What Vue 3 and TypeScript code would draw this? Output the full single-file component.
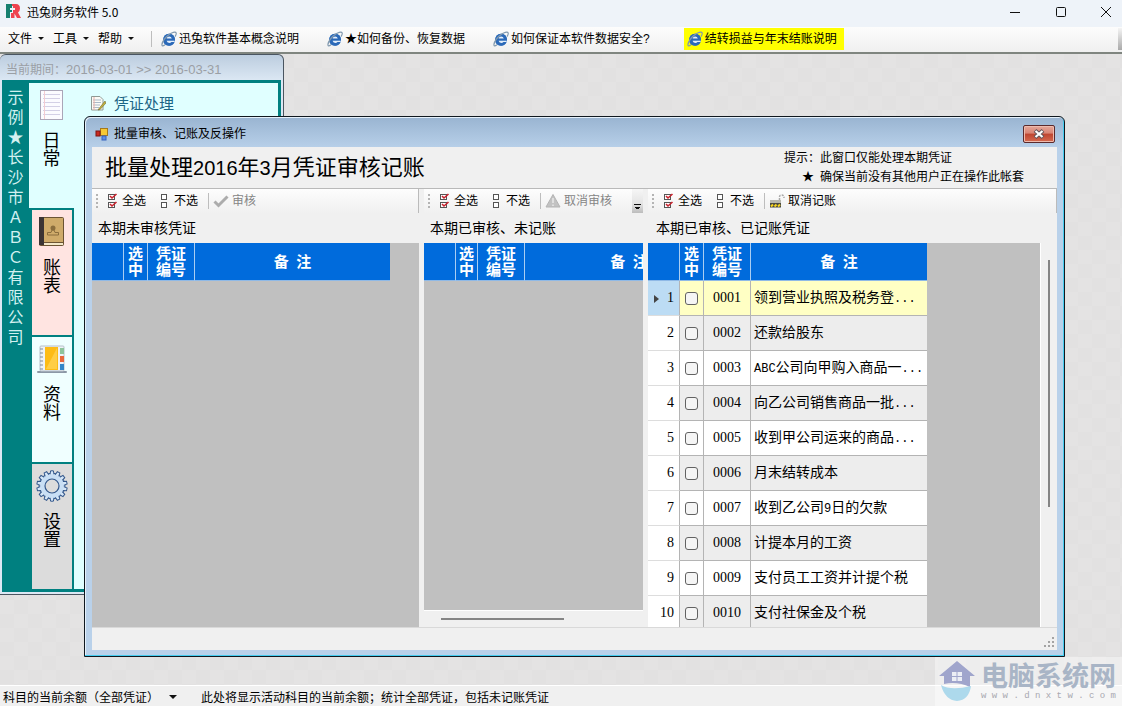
<script setup lang="ts">
import { ref } from 'vue'

interface Voucher { no: string; note: string; checked: boolean }
interface Panel {
  id: string
  title: string
  action: string
  icon: 'check' | 'warn' | 'lock'
  disabled: boolean
  kind: string
  rows: Voucher[]
}

const menus: string[] = ['文件', '工具', '帮助']
const links = [
  { text: '迅兔软件基本概念说明', hot: false },
  { text: '★如何备份、恢复数据', hot: false },
  { text: '如何保证本软件数据安全?', hot: false },
  { text: '结转损益与年末结账说明', hot: true },
]
const company: string[] = Array.from('示例★长沙市ＡＢＣ有限公司')
const notes: string[] = [
  '领到营业执照及税务登...', '还款给股东', 'ABC公司向甲购入商品一...', '向乙公司销售商品一批...',
  '收到甲公司运来的商品...', '月末结转成本', '收到乙公司9日的欠款', '计提本月的工资',
  '支付员工工资并计提个税', '支付社保金及个税',
]
const panels = ref<Panel[]>([
  { id: 'a', title: '本期未审核凭证', action: '审核', icon: 'check', disabled: true, kind: 'first', rows: [] },
  { id: 'b', title: '本期已审核、未记账', action: '取消审核', icon: 'warn', disabled: true, kind: 'second', rows: [] },
  {
    id: 'c', title: '本期已审核、已记账凭证', action: '取消记账', icon: 'lock', disabled: false, kind: 'third',
    rows: notes.map((note, i) => ({ no: String(i + 1).padStart(4, '0'), note, checked: false })),
  },
])

function setAll(panel: Panel, value: boolean): void {
  panel.rows.forEach((r) => { r.checked = value })
}
function parts(text: string): string[] {
  return text.split(/([A-Za-z0-9.]+)/).filter(Boolean)
}
function isLatin(text: string): boolean {
  return /^[A-Za-z0-9.]/.test(text)
}
const teeth: number[] = Array.from({ length: 14 }, (_, i) => (i * 360) / 14)
</script>

<template>
  <div class="app">
    <header class="titlebar">
      <svg class="logo" viewBox="0 0 15 15" aria-hidden="true">
        <path d="M0 0H6V4H4V6H6V8H4V14H0Z" fill="#17806f" />
        <path d="M6 0H10Q14 0 14 4.500Q14 7 12 8.500L15 14H11L8.500 9.500V14H5V9H7V6H9V4H7V2H6Z" fill="#ee4450" />
      </svg>
      <h1>迅兔财务软件 5.0</h1>
      <div class="winbtns">
        <button aria-label="最小化"><svg viewBox="0 0 12 12"><path d="M1 6.500H11" /></svg></button>
        <button aria-label="最大化"><svg viewBox="0 0 12 12"><rect x="1.500" y="1.500" width="9" height="9" rx="1" /></svg></button>
        <button aria-label="关闭"><svg viewBox="0 0 12 12"><path d="M1 1L11 11M11 1L1 11" /></svg></button>
      </div>
    </header>

    <nav class="menubar">
      <button v-for="m in menus" :key="m" class="menu">{{ m }}<i class="caret"></i></button>
      <span class="sep"></span>
      <div class="links">
        <a v-for="l in links" :key="l.text" href="#" :class="{ hot: l.hot }">
          <svg class="ie" viewBox="0 0 16 16" aria-hidden="true">
            <circle cx="8" cy="8.700" r="6" fill="#3c7cc9" />
            <path d="M14 9.700H5.600Q6 12 8.300 12Q9.700 12 10.500 11H13.500Q12 14.800 8.200 14.800Q2.300 14.500 2.300 8.700Q2.800 3 8.200 2.800Q14 3 14 9.700Z" fill="#2b69b8" />
            <path d="M5.600 7.600H10.800Q10.300 5.600 8.200 5.600Q6.100 5.600 5.600 7.600ZM5.600 9.800H13.500V10.900H10.400Q9.600 11.900 8.300 11.900Q6 11.900 5.600 9.800Z" fill="#e3eefa" />
            <path d="M4 13.700Q.5 16.300 1 13Q2 8.600 6.500 4.700Q12.500 .2 14.800 1.400Q16 2.600 14 5.600" fill="none" stroke="#8199ae" stroke-width="1.200" />
          </svg>{{ l.text }}</a>
      </div>
      <span class="more"></span>
    </nav>

    <main class="desktop">
      <section class="nav-window">
        <div class="period">当前期间：<span>2016-03-01 &gt;&gt; 2016-03-31</span></div>
        <div class="nav-body">
          <div class="company"><span v-for="(c, i) in company" :key="i">{{ c }}</span></div>
          <div class="tabs">
            <button class="tab daily">
              <svg viewBox="0 0 32 32"><rect x="4.500" y="1.500" width="22" height="29" fill="#fbfbff" stroke="#aaa6b8" /><path d="M7 5.500H24M7 9.500H24M7 13.500H24M7 17.500H24M7 21.500H24M7 25.500H24" stroke="#d3d0e6" /><path d="M8.500 2V30" stroke="#f3ccd2" /></svg>
              <span>日常</span>
            </button>
            <button class="tab ledger">
              <svg viewBox="0 0 32 32"><rect x="3" y="1" width="25" height="29" rx="2" fill="#6b5433" /><rect x="3" y="1" width="5" height="28" fill="#3b3434" /><rect x="8" y="2" width="19" height="24" fill="#cfab6a" /><path d="M8 28H27" stroke="#f3e8c8" stroke-width="2" /><circle cx="17" cy="12" r="2.500" fill="#8a6d3d" /><path d="M11.500 19V16.500H15L16 14H18L19 16.500H22.500V19Z" fill="none" stroke="#8a6d3d" /></svg>
              <span>账表</span>
            </button>
            <button class="tab data">
              <svg viewBox="0 0 32 32"><rect x="1" y="28" width="30" height="2" rx="1" fill="#8c98a6" /><rect x="4" y="3" width="24" height="25" rx="1" fill="#eef2f6" stroke="#b6c0ca" /><rect x="9" y="4" width="13" height="23" fill="#fdbc16" /><path d="M10 26L21 5V26Z" fill="#ffce45" /><rect x="24" y="5" width="4" height="6" fill="#8dc49b" /><rect x="24" y="13" width="4" height="6" fill="#e9683b" /><rect x="24" y="21" width="4" height="6" fill="#3187c8" /><path d="M4 6H7M4 10H7M4 14H7M4 18H7M4 22H7M4 26H7" stroke="#7e8b99" /></svg>
              <span>资料</span>
            </button>
            <button class="tab setup">
              <svg viewBox="0 0 32 32">
                <circle cx="16" cy="16" r="13" fill="#c9dff5" stroke="#34588c" />
                <g v-for="t in teeth" :key="t" :transform="`rotate(${t} 16 16)`"><path d="M14 4.500L14.600 .8H17.400L18 4.500" fill="#d5e6f7" stroke="#34588c" /></g>
                <circle cx="16" cy="16" r="11.500" fill="#c9dff5" />
                <circle cx="16" cy="16" r="7" fill="#dcdcdc" stroke="#34588c" stroke-width="1.200" />
              </svg>
              <span>设置</span>
            </button>
          </div>
          <div class="nav-content">
            <a href="#">
              <svg viewBox="0 0 16 16"><path d="M1.500 1.500H10L13 4.500V15H1.500Z" fill="#fbfbf6" stroke="#8f9a94" /><path d="M3 5H11M3 7.500H11M3 10H10M3 12.500H9" stroke="#aab9c8" /><path d="M4 2V15" stroke="#e9b0a8" /><path d="M15 6L9 13.500L8 15L10 14.500L16 8Z" fill="#c7b13c" stroke="#6a6a30" stroke-width=".6" /></svg>
              凭证处理</a>
          </div>
        </div>
      </section>

      <section class="dialog" role="dialog" aria-labelledby="dlg-title">
        <div class="dlg-title">
          <svg viewBox="0 0 14 14" aria-hidden="true"><rect x="5.500" y="1.500" width="7" height="7" fill="#f6c835" stroke="#a5791c" /><rect x="1" y="4" width="4" height="5" fill="#c92a20" stroke="#7f1511" /><rect x="7" y="9" width="4" height="4" fill="#5d8ee8" stroke="#3763bd" /></svg>
          <span id="dlg-title">批量审核、记账及反操作</span>
          <button class="close" aria-label="关闭"><svg viewBox="0 0 12 10"><path d="M2 1.500L10 8.500M10 1.500L2 8.500" stroke="#61555a" stroke-width="4" /><path d="M2.500 2L9.500 8M9.500 2L2.500 8" stroke="#fff" stroke-width="2.200" /></svg></button>
        </div>
        <div class="dlg-body">
          <div class="dlg-head">
            <h2>批量处理<span>2016</span>年<span>3</span>月凭证审核记账</h2>
            <div class="hint">
              <p>提示：此窗口仅能处理本期凭证</p>
              <p class="sub"><b>★</b>确保当前没有其他用户正在操作此帐套</p>
            </div>
          </div>
          <div class="panels">
            <div v-for="p in panels" :key="p.id" class="panel" :class="p.kind">
              <div class="tools">
                <span class="grip"></span>
                <button @click="setAll(p, true)">
                  <svg class="sm" viewBox="0 0 10 16"><rect x=".5" y="1.500" width="6" height="5" fill="#fff" stroke="#555" /><rect x=".5" y="9.500" width="6" height="5" fill="#fff" stroke="#555" /><path d="M2 3L4 5L8.500 1M2 11L4 13L8.500 9" fill="none" stroke="#c8202c" stroke-width="1.600" /></svg>全选
                </button>
                <button class="none" @click="setAll(p, false)">
                  <svg class="sm" viewBox="0 0 10 16"><rect x="1.500" y="1.500" width="5" height="5" fill="#fff" stroke="#555" /><rect x="1.500" y="9.500" width="5" height="5" fill="#fff" stroke="#555" /></svg>不选
                </button>
                <span class="sep"></span>
                <button class="act" :disabled="p.disabled">
                  <svg v-if="p.icon === 'check'" viewBox="0 0 16 16"><path d="M1.500 8.500L5.500 12.500L14.500 3.500" fill="none" stroke="#acacac" stroke-width="3" /></svg>
                  <svg v-else-if="p.icon === 'warn'" viewBox="0 0 16 16"><path d="M8 1.500L15 14H1Z" fill="#c2c2c2" stroke="#b4b4b4" stroke-linejoin="round" /><path d="M8 5V10M8 11.500V13" stroke="#e6e6e6" stroke-width="1.600" /></svg>
                  <svg v-else viewBox="0 0 16 16"><rect x="1" y="8" width="11" height="6.500" fill="#4a4a42" /><rect x="1" y="7" width="11" height="3" fill="#b8b8ae" /><path d="M2 13.500L4 11.500M5.500 13.500L7.500 11.500M9 13.500L11 11.500" stroke="#f6d51f" stroke-width="2" /><path d="M10.500 7V4Q10.500 2 12.500 2Q15 2 15 5" fill="none" stroke="#aaa" stroke-width="1.500" stroke-dasharray="2 1" /></svg>
                  {{ p.action }}
                </button>
                <span v-if="p.kind === 'second'" class="overflow"><i></i></span>
              </div>
              <div class="label">{{ p.title }}</div>
              <div class="pane">
                <div class="grid">
                  <table>
                    <colgroup><col class="c0"><col class="c1"><col class="c2"><col class="c3"></colgroup>
                    <thead>
                      <tr><th></th><th>选<br>中</th><th>凭证<br>编号</th><th>备&ensp;注</th></tr>
                    </thead>
                    <tbody>
                      <tr v-for="(r, i) in p.rows" :key="r.no" :class="{ current: i === 0 }">
                        <td class="num"><svg v-if="i === 0" viewBox="0 0 6 8"><path d="M0 0L5 4L0 8Z" fill="#444" /></svg>{{ i + 1 }}</td>
                        <td class="chk"><input v-model="r.checked" type="checkbox" :aria-label="'选中 ' + r.no"></td>
                        <td class="no">{{ r.no }}</td>
                        <td class="note"><span v-for="(s, k) in parts(r.note)" :key="k" :class="{ latin: isLatin(s) }">{{ s }}</span></td>
                      </tr>
                    </tbody>
                  </table>
                </div>
                <div v-if="p.kind === 'third'" class="vscroll"><i></i></div>
                <div v-if="p.kind === 'second'" class="hscroll"><i></i></div>
              </div>
            </div>
          </div>
          <div class="dlg-foot"><svg viewBox="0 0 12 12"><path d="M9 1h2v2h-2zM5 5h2v2h-2zM9 5h2v2h-2zM1 9h2v2h-2zM5 9h2v2h-2zM9 9h2v2h-2z" fill="#a3a3a3" /></svg></div>
        </div>
      </section>
    </main>

    <footer class="statusbar">
      <button>科目的当前余额（全部凭证）<i class="caret"></i></button>
      <span>此处将显示活动科目的当前余额；统计全部凭证，包括未记账凭证</span>
    </footer>

    <div class="watermark">
      <svg viewBox="0 0 38 42" aria-hidden="true">
        <path d="M19 1L37 16H32V27Q19 21 6 24V16H1Z" fill="#a0a5cc" />
        <path d="M14 12H24V21H14Z" fill="#eceef5" /><path d="M19 12V21M14 16.500H24" stroke="#a0a5cc" />
        <path d="M3 25Q13 31 33 26Q31 40 19 41Q7 40 3 25Z" fill="#add9ec" />
      </svg>
      <div><strong>电脑系统网</strong><small>w w w . d n x t w . c o m</small></div>
    </div>
  </div>
</template>

<style>
html, body { margin: 0; overflow: hidden; }
</style>

<style scoped>
* { box-sizing: border-box; }
.app {
  position: relative;
  display: flex;
  flex-direction: column;
  height: 100vh;
  background: #f0f0f0;
  color: #000;
  font: 12px/16px "Liberation Sans", "Noto Sans CJK SC", sans-serif;
  white-space: nowrap;
}
button {
  display: flex;
  align-items: center;
  margin: 0;
  padding: 0;
  border: 0;
  background: none;
  color: inherit;
  font: inherit;
}
a { color: inherit; text-decoration: none; }
h1, h2, p { margin: 0; font-weight: 400; }
svg { display: block; flex: none; }
.caret {
  width: 0;
  height: 0;
  border: 3px solid transparent;
  border-top-color: #111;
  border-bottom-width: 0;
}
.sep { width: 1px; height: 16px; background: #bdbdbd; }

.titlebar { display: flex; align-items: center; height: 27px; padding: 0 0 4px 6px; background: #eef3f9; }
.logo { width: 15px; height: 15px; margin-right: 6px; }
.titlebar h1 { font: 12px/16px "Noto Sans CJK SC", sans-serif; }
.winbtns { display: flex; margin-left: auto; }
.winbtns button { justify-content: center; width: 46px; height: 23px; }
.winbtns button:last-child { width: 38px; padding-left: 6px; }
.winbtns svg { width: 12px; height: 12px; fill: none; stroke: #111; }

.menubar {
  display: flex;
  align-items: center;
  height: 27px;
  padding: 0 0 2px 8px;
  background: linear-gradient(#fcfcfc, #f0f0f0);
  border-bottom: 2px solid #7f857f;
}
.menu { width: 45px; gap: 6px; }
.menubar > .sep { margin: 0 9px 0 8px; }
.links { display: flex; align-items: center; gap: 28px; }
.links a { display: flex; align-items: center; gap: 2px; height: 22px; }
.links .hot { margin-left: 6px; padding: 0 7px 0 3px; background: #ff0; }
.ie { width: 16px; height: 16px; }
.more { width: 4px; height: 22px; margin-left: auto; background: linear-gradient(#f4f4f4, #aaa); }

.desktop {
  position: relative;
  flex: 1;
  min-height: 0;
  overflow: hidden;
  background: repeating-conic-gradient(#e4e3e3 0 25%, #e2e1e1 0 50%) 0 0 / 28px 28px;
}
.nav-window {
  position: absolute;
  top: 0;
  left: 0;
  width: 284px;
  padding: 0 2px 2px;
  border: 1px solid #4a5560;
  border-left: 0;
  border-radius: 6px 6px 0 0;
  background: linear-gradient(#bccddf, #dce8f4 26px);
}
.period { height: 25px; padding: 4px 0 0 4px; color: #9b9fa5; font: 12px/20px "Noto Sans CJK SC", sans-serif; }
.period span { font: 13px/20px "Liberation Sans", sans-serif; }
.nav-body { display: flex; border: 3px solid #008080; border-width: 3px 3px 3px 0; background: #e0ffff; }
.company {
  display: flex;
  flex-direction: column;
  align-items: center;
  width: 27px;
  padding-top: 3px;
  background: #008080;
  color: #d2f0f0;
  font: 16px/20px "Noto Sans CJK SC", sans-serif;
}
.tabs { display: flex; flex-direction: column; width: 45px; background: #008080; gap: 2px; }
.tab {
  flex-direction: column;
  height: 125px;
  margin: 0 2px 0 3px;
  padding-top: 6px;
  gap: 9px;
  font: 18px/18px "Noto Sans CJK SC", sans-serif;
}
.tab svg { width: 32px; height: 32px; }
.tab span { width: 18px; white-space: normal; }
.daily { margin: 0; background: #e0ffff; }
.ledger { background: #ffe4e1; }
.data { background: #f0ffff; }
.setup { background: #dcdcdc; }
.nav-content { padding: 10px 16px; color: #1c6585; font: 15px/20px "Noto Sans CJK SC", sans-serif; }
.nav-content a { display: flex; align-items: center; gap: 8px; }
.nav-content svg { width: 16px; height: 16px; }

.dialog {
  position: absolute;
  top: 62px;
  right: 57px;
  bottom: 28px;
  left: 84px;
  display: flex;
  flex-direction: column;
  padding: 0 7px 6px;
  border: 1px solid #10181f;
  border-radius: 6px 6px 0 0;
  background: linear-gradient(#99b4d1, #b9d1ea 32px);
  box-shadow: inset -1px -1px 0 #45cdf0, inset 1px 1px 0 #e6f1fb;
}
.dlg-title { display: flex; align-items: center; height: 30px; padding: 4px 2px 0 3px; gap: 5px; }
.dlg-title > svg { width: 14px; height: 14px; }
.close {
  justify-content: center;
  width: 32px;
  height: 18px;
  margin-left: auto;
  border: 1px solid #5b2a2c;
  border-radius: 2px;
  background: linear-gradient(#e5a799, #d98474 45%, #be4530 50%, #d66a50);
  box-shadow: inset 0 0 0 1px #eebbae;
}
.close svg { width: 12px; height: 10px; }
.dlg-body { display: flex; flex: 1; flex-direction: column; min-height: 0; background: #f0f0f0; }
.dlg-head { display: flex; justify-content: space-between; height: 42px; padding: 0 33px 0 13px; border-bottom: 1px solid #b9b9b9; }
.dlg-head h2 { font: 22px/36px "Noto Sans CJK SC", sans-serif; }
.dlg-head h2 span { font: 20px/36px "Liberation Sans", sans-serif; }
.hint { font: 12px/19px "Noto Sans CJK SC", sans-serif; }
.hint .sub { padding-left: 18px; }
.hint b { margin-right: 6px; font-weight: 400; }

.panels {
  display: grid;
  flex: 1;
  grid-template-columns: minmax(0, 327fr) minmax(0, 219fr) minmax(0, 409fr);
  gap: 5px;
  min-height: 0;
}
.panel { display: flex; flex-direction: column; min-width: 0; min-height: 0; }
.tools { display: flex; align-items: center; height: 24px; padding-left: 4px; background: linear-gradient(#fdfdfd, #f0f0f0); }
.first .tools, .third .tools { border-right: 1px solid #bbb; }
.grip { width: 2px; height: 14px; margin-right: 10px; background: repeating-linear-gradient(#b4b4b4 0 2px, transparent 2px 4px); }
.tools svg { width: 16px; height: 16px; }
.tools .sm { width: 10px; }
.tools button { gap: 4px; }
.tools .none { margin: 0 10px 0 14px; }
.tools .act { gap: 3px; margin-left: 4px; }
.tools button:disabled { color: #858585; }
.overflow { display: flex; align-items: flex-end; justify-content: center; width: 11px; height: 24px; margin-left: auto; padding-bottom: 3px; background: linear-gradient(#f6f6f6, #e4e4e4 60%, #bcbcbc); }
.overflow i { width: 7px; height: 6px; border-top: 1px solid #111; background: linear-gradient(#111, #111) 50% 2px / 5px 1px no-repeat, linear-gradient(#111, #111) 50% 3px / 3px 1px no-repeat; }
.label { height: 30px; padding-left: 6px; font: 14px/28px "Noto Sans CJK SC", sans-serif; }
.third .label { padding-left: 8px; }
.pane { display: flex; flex: 1; min-height: 0; }
.second .pane { flex-direction: column; }
.grid { flex: 1; min-width: 0; min-height: 0; overflow: hidden; background: #c0c0c0; }
.vscroll { width: 17px; padding: 17px 8px 0 7px; border-left: 1px solid #fff; }
.vscroll i { display: block; width: 2px; height: 247px; background: #858585; }
.hscroll { height: 17px; padding: 7px 0 0 17px; border-top: 1px solid #fff; }
.hscroll i { display: block; width: 123px; height: 2px; background: #858585; }

table { width: 298px; border-collapse: separate; border-spacing: 0; table-layout: fixed; }
.second table { width: 309px; }
.third table { width: 279px; }
.c0 { width: 32px; }
.c1 { width: 24px; }
.c2 { width: 47px; }
.second .c1 { width: 22px; }
th {
  height: 38px;
  padding: 0 0 1px;
  border-right: 1px solid #a9cdf2;
  border-bottom: 1px solid #8fb9e6;
  background: #006bdc;
  color: #fff;
  font: 700 15px/16px "Noto Sans CJK SC", sans-serif;
}
th:last-child { border-right: 0; }
td {
  height: 35px;
  padding: 0;
  border-right: 1px solid #b4b4b4;
  border-bottom: 1px solid #b4b4b4;
  background: #fff;
  font: 14px/20px "Liberation Serif", "Noto Sans CJK SC", serif;
}
tr:nth-child(even) td { background: #ededed; }
tr td.num, tr:nth-child(even) td.num { padding-right: 5px; border-bottom-color: #ddd; background: #fff; text-align: right; }
.num svg { float: left; width: 6px; height: 8px; margin: 7px 0 0 6px; }
.current td { background: #ffffc4; }
tr.current td.num { background: #bcdcf4; }
.chk { text-align: center; }
.chk input {
  appearance: none;
  display: block;
  width: 13px;
  height: 13px;
  margin: 0 auto;
  border: 1px solid #626262;
  border-radius: 3px;
  background: #f5f5f5;
}
.chk input:checked { background: #006bdc; }
.no { text-align: center; }
td.note { padding-left: 3px; border-right: 0; }
.latin { font: 12px/20px "Liberation Mono", monospace; }
.dlg-foot { display: flex; align-items: flex-end; justify-content: flex-end; height: 23px; padding: 2px; border-top: 1px solid #d9d9d9; }
.dlg-foot svg { width: 12px; height: 12px; }

.statusbar { display: flex; align-items: center; height: 21px; padding: 2px 0 0 3px; border-top: 1px solid #fff; background: #f0f0f0; font-family: "Noto Sans CJK SC", sans-serif; }
.statusbar button { gap: 10px; margin-right: 24px; }
.statusbar .caret { border-width: 4px 4px 0; }

.watermark {
  position: absolute;
  right: 0;
  bottom: 0;
  display: flex;
  gap: 5px;
  width: 187px;
  height: 49px;
  padding: 3px 0 0 3px;
  background: rgba(255, 255, 255, 0.4);
  pointer-events: none;
}
.watermark svg { width: 38px; height: 42px; }
.watermark strong { display: block; color: #a9b5c6; font: 700 27px/30px "Noto Sans CJK SC", sans-serif; }
.watermark small { display: block; color: #a8a8b0; font: 9px/12px "Liberation Mono", monospace; }
</style>
